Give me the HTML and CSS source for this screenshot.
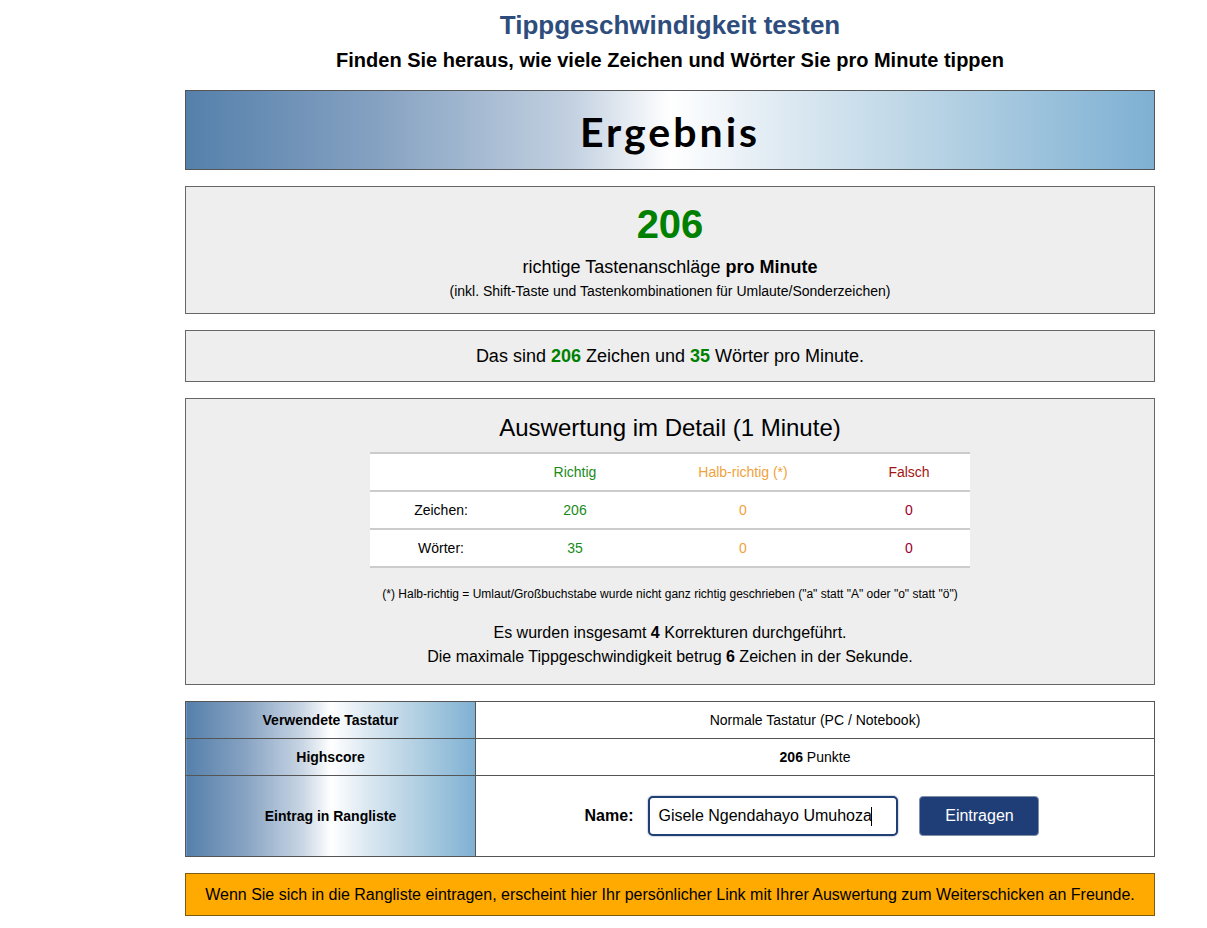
FILE: index.html
```html
<!DOCTYPE html>
<html lang="de">
<head>
<meta charset="utf-8">
<title>Tippgeschwindigkeit testen</title>
<link rel="stylesheet" href="styles.css">
</head>
<body>
<div class="page">
  <h1 class="title">Tippgeschwindigkeit testen</h1>
  <h2 class="subtitle">Finden Sie heraus, wie viele Zeichen und Wörter Sie pro Minute tippen</h2>

  <div class="banner"><span>Ergebnis</span></div>

  <div class="box score">
    <div class="big">206</div>
    <div class="line">richtige Tastenanschläge <b>pro Minute</b></div>
    <div class="small">(inkl. Shift-Taste und Tastenkombinationen für Umlaute/Sonderzeichen)</div>
  </div>

  <div class="box summary">
    Das sind <b class="green">206</b> Zeichen und <b class="green">35</b> Wörter pro Minute.
  </div>

  <div class="box detail">
    <div class="heading">Auswertung im Detail (1 Minute)</div>
    <table class="stats">
      <colgroup><col class="c1"><col class="c2"><col class="c3"><col class="c4"></colgroup>
      <tr>
        <th></th>
        <th class="ok">Richtig</th>
        <th class="half">Halb-richtig (*)</th>
        <th class="bad">Falsch</th>
      </tr>
      <tr>
        <td>Zeichen:</td>
        <td class="ok">206</td>
        <td class="half">0</td>
        <td class="bad2">0</td>
      </tr>
      <tr>
        <td>Wörter:</td>
        <td class="ok">35</td>
        <td class="half">0</td>
        <td class="bad2">0</td>
      </tr>
    </table>
    <div class="note">(*) Halb-richtig = Umlaut/Großbuchstabe wurde nicht ganz richtig geschrieben ("a" statt "A" oder "o" statt "ö")</div>
    <div class="info first">Es wurden insgesamt <b>4</b> Korrekturen durchgeführt.</div>
    <div class="info">Die maximale Tippgeschwindigkeit betrug <b>6</b> Zeichen in der Sekunde.</div>
  </div>

  <table class="meta">
    <tr class="r1">
      <th>Verwendete Tastatur</th>
      <td>Normale Tastatur (PC / Notebook)</td>
    </tr>
    <tr class="r2">
      <th>Highscore</th>
      <td><b>206</b> Punkte</td>
    </tr>
    <tr class="r3">
      <th>Eintrag in Rangliste</th>
      <td>
        <form class="entry">
          <label for="name">Name:</label>
          <span class="field">
            <input id="name" type="text" value="Gisele Ngendahayo Umuhoza">
            <span class="caret"></span>
          </span>
          <button type="button">Eintragen</button>
        </form>
      </td>
    </tr>
  </table>

  <div class="notice">Wenn Sie sich in die Rangliste eintragen, erscheint hier Ihr persönlicher Link mit Ihrer Auswertung zum Weiterschicken an Freunde.</div>
</div>
</body>
</html>
```

FILE: styles.css
```css
body {
  margin: 0;
  font-family: "Liberation Sans", Arial, sans-serif;
  color: #000;
  background: #fff;
}

.page {
  width: 970px;
  margin-left: 185px;
  padding-bottom: 12px;
}

.title {
  margin: 10px 0 0;
  font-size: 26px;
  line-height: 30px;
  font-weight: bold;
  text-align: center;
  color: #2e4d7c;
}

.subtitle {
  margin: 9px 0 0;
  font-size: 20px;
  line-height: 22px;
  font-weight: bold;
  text-align: center;
}

.banner {
  margin-top: 19px;
  height: 78px;
  border: 1px solid #555;
  background: linear-gradient(to right, #5580ab 0%, #86a2c2 20%, #c3d1e1 40%, #ffffff 50%, #dde9f2 62%, #b1cfe2 80%, #7eb0d3 100%);
  display: flex;
  align-items: center;
  justify-content: center;
}

.banner span {
  font-family: Lato, "Open Sans", sans-serif;
  font-weight: 700;
  font-size: 41px;
  letter-spacing: 3px;
  color: #000;
  margin-top: 2px;
}

.box {
  margin-top: 16px;
  border: 1px solid #666;
  background: #eeeeee;
  text-align: center;
}

.score {
  padding: 13px 0 14px;
}

.big {
  font-size: 40px;
  line-height: 48px;
  font-weight: bold;
  color: #008000;
}

.line {
  margin-top: 8px;
  font-size: 18px;
  line-height: 22px;
}

.small {
  margin-top: 5px;
  font-size: 14px;
  line-height: 16px;
}

.summary {
  padding: 14px 0;
  font-size: 18px;
  line-height: 22px;
}

.green {
  color: #008000;
}

.detail {
  padding: 15px 0 15px;
}

.heading {
  font-size: 24px;
  line-height: 28px;
}

.stats {
  margin: 10px auto 0;
  width: 600px;
  border-collapse: collapse;
  background: #fff;
  table-layout: fixed;
  font-size: 14px;
}

.stats .c1 { width: 142px; }
.stats .c2 { width: 126px; }
.stats .c3 { width: 210px; }
.stats .c4 { width: 122px; }

.stats th,
.stats td {
  height: 36px;
  padding: 0;
  font-weight: normal;
  text-align: center;
  border-top: 2px solid #cccccc;
  border-bottom: 2px solid #cccccc;
}

.stats .ok { color: #1a8a1a; }
.stats .half { color: #f0a23c; }
.stats .bad { color: #a51414; }
.stats .bad2 { color: #a0002c; }

.note {
  margin-top: 19px;
  font-size: 12px;
  line-height: 14px;
}

.info {
  font-size: 16px;
  line-height: 24px;
}

.info.first {
  margin-top: 20px;
}

.meta {
  margin-top: 16px;
  width: 970px;
  border-collapse: collapse;
  font-size: 14px;
}

.meta th,
.meta td {
  border: 1px solid #555;
  padding: 0;
  text-align: center;
}

.meta th {
  width: 289px;
  font-weight: bold;
  background: linear-gradient(to right, #5580ab 0%, #86a2c2 20%, #c8d5e4 40%, #ffffff 50%, #dde9f2 62%, #b1cfe2 80%, #7eb0d3 100%);
}

.meta .r1 th, .meta .r1 td,
.meta .r2 th, .meta .r2 td {
  height: 36px;
}

.meta .r3 th, .meta .r3 td {
  height: 80px;
}

.entry {
  display: flex;
  align-items: center;
  justify-content: center;
  margin: 0 0 0 -6px;
}

.entry label {
  font-size: 16px;
  font-weight: bold;
  margin-right: 15px;
}

.field {
  position: relative;
  display: block;
}

.entry input {
  display: block;
  box-sizing: border-box;
  width: 250px;
  height: 40px;
  border: 2px solid #1f3f75;
  border-radius: 5px;
  padding: 0 8px;
  font-family: "Liberation Sans", Arial, sans-serif;
  font-size: 16px;
  color: #000;
  box-shadow: 0 0 2px rgba(31, 63, 117, 0.6);
  outline: none;
}

.caret {
  position: absolute;
  left: 223px;
  top: 11px;
  width: 1px;
  height: 19px;
  background: #000;
}

.entry button {
  margin-left: 21px;
  width: 120px;
  height: 40px;
  border: 1px solid #7f8fa8;
  border-radius: 4px;
  background: #1f3e77;
  color: #fff;
  font-family: "Liberation Sans", Arial, sans-serif;
  font-size: 16px;
}

.notice {
  margin-top: 16px;
  border: 1px solid #7b5c13;
  background: #ffaa00;
  padding: 11px 0 10px;
  font-size: 16px;
  line-height: 20px;
  text-align: center;
}
```
